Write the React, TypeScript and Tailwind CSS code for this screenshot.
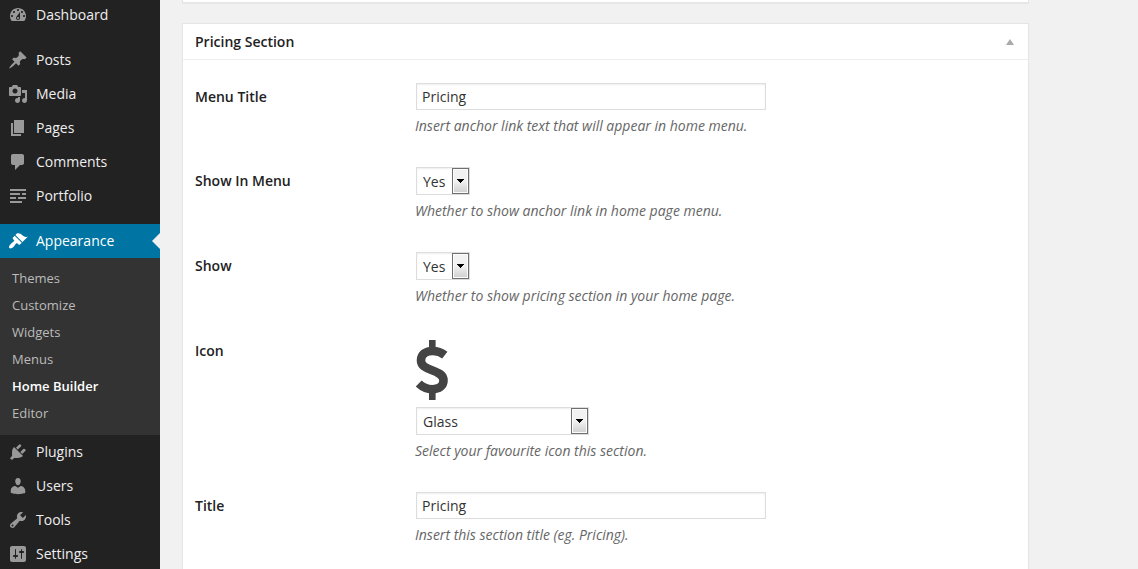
import { useState } from "react";
import type { ReactNode } from "react";

const ICONS = {
  dashboard:
    "M3.76 16h12.48c1.1-1.37 1.76-3.11 1.76-5 0-4.42-3.58-8-8-8s-8 3.58-8 8c0 1.89.66 3.63 1.76 5zM10 4c.55 0 1 .45 1 1s-.45 1-1 1-1-.45-1-1 .45-1 1-1zM6 6c.55 0 1 .45 1 1s-.45 1-1 1-1-.45-1-1 .45-1 1-1zm8 0c.55 0 1 .45 1 1s-.45 1-1 1-1-.45-1-1 .45-1 1-1zm-5.37 5.55L12 7v6c0 1.1-.9 2-2 2s-2-.9-2-2c0-.57.24-1.08.63-1.45zM4 10c.55 0 1 .45 1 1s-.45 1-1 1-1-.45-1-1 .45-1 1-1zm12 0c.55 0 1 .45 1 1s-.45 1-1 1-1-.45-1-1 .45-1 1-1zm-5 3c0-.55-.45-1-1-1s-1 .45-1 1 .45 1 1 1 1-.45 1-1z",
  posts:
    "M10.44 3.02l1.82-1.82 6.36 6.35-1.83 1.82c-1.05-.68-2.48-.57-3.41.36l-.75.75c-.92.93-1.04 2.35-.35 3.41l-1.83 1.82-2.41-2.41-2.8 2.79c-.42.42-3.38 2.71-3.8 2.29s1.86-3.39 2.28-3.81l2.79-2.79L4.1 9.36l1.83-1.82c1.05.69 2.48.57 3.4-.36l.75-.75c.93-.92 1.05-2.35.36-3.41z",
  media:
    "M13 11V4c0-.55-.45-1-1-1h-1.67L9 1H5L3.67 3H2c-.55 0-1 .45-1 1v7c0 .55.45 1 1 1h10c.55 0 1-.45 1-1zM7 4.5c1.38 0 2.5 1.12 2.5 2.5S8.38 9.5 7 9.5 4.5 8.38 4.5 7 5.62 4.5 7 4.5zM14 6h5v10.5c0 1.38-1.12 2.5-2.5 2.5S14 17.88 14 16.5s1.12-2.5 2.5-2.5c.17 0 .34.02.5.05V9h-3V6zm-4 8.05V13h2v3.5c0 1.38-1.12 2.5-2.5 2.5S7 17.88 7 16.5 8.12 14 9.5 14c.17 0 .34.02.5.05z",
  pages: "M6 15V2h10v13H6zm-1 1h8v2H3V5h2v11z",
  comments:
    "M5 2h9c1.1 0 2 .9 2 2v7c0 1.1-.9 2-2 2h-2l-5 5v-5H5c-1.1 0-2-.9-2-2V4c0-1.1.9-2 2-2z",
  portfolio:
    "M2 3h16v2H2zM2 7h10v2H2zM14 7h4v2h-4zM2 11h6v2H2zM10 11h8v2h-8zM2 15h12v2H2z",
  appearance:
    "M14.48 11.06L7.41 3.99l1.5-1.5c.5-.56 2.3-.47 3.51.32 1.21.8 1.43 1.28 2.91 2.1 1.18.64 2.45 1.26 4.45.85zm-.71.71L6.7 4.7 4.93 6.47c-.39.39-.39 1.02 0 1.41l1.06 1.06c.39.39.39 1.03 0 1.42-.6.6-1.43 1.11-2.21 1.69-.35.26-.7.53-1.01.84C1.43 14.23.4 16.08 1.4 17.07c.99 1 2.84-.03 4.18-1.36.31-.31.58-.66.85-1.02.57-.78 1.08-1.61 1.69-2.21.39-.39 1.02-.39 1.41 0l1.06 1.06c.39.39 1.02.39 1.41 0z",
  plugins:
    "M13.11 4.36L9.87 7.6 8 5.73l3.24-3.24c.35-.34 1.05-.2 1.56.32.52.51.66 1.21.31 1.55zm-8 1.77l.91-1.12 9.01 9.01-1.19.84c-.71.71-2.63 1.16-3.82 1.16H6.14L4.9 17.26c-.59.59-1.54.59-2.12 0-.59-.58-.59-1.53 0-2.12l1.24-1.24v-3.88c0-1.13.4-3.19 1.09-3.89zm7.26 3.97l3.24-3.24c.34-.35 1.04-.21 1.55.31.52.51.66 1.21.31 1.55l-3.24 3.25z",
  users:
    "M10 9.25c-2.27 0-2.73-3.44-2.73-3.44C7 4.02 7.82 2 9.97 2c2.16 0 2.98 2.02 2.71 3.81 0 0-.41 3.44-2.68 3.44zm0 2.57L12.72 10c2.39 0 4.52 2.33 4.52 4.53v2.49s-3.65 1.13-7.24 1.13c-3.65 0-7.24-1.13-7.24-1.13v-2.49c0-2.25 1.94-4.48 4.47-4.48z",
  tools:
    "M16.68 9.77c-1.34 1.34-3.3 1.67-4.95.99l-5.41 6.52c-.99.99-2.59.99-3.58 0s-.99-2.59 0-3.57l6.52-5.42c-.68-1.65-.35-3.61.99-4.95 1.28-1.28 3.12-1.62 4.72-1.06l-2.89 2.89 2.82 2.82 2.86-2.87c.53 1.58.18 3.39-1.08 4.65zM3.81 16.21c.4.39 1.04.39 1.43 0 .4-.4.4-1.04 0-1.43-.39-.4-1.03-.4-1.43 0-.39.39-.39 1.03 0 1.43z",
  settings:
    "M18 16V4c0-1.1-.9-2-2-2H4c-1.1 0-2 .9-2 2v12c0 1.1.9 2 2 2h12c1.1 0 2-.9 2-2zM8 11h1c.55 0 1 .45 1 1s-.45 1-1 1H8v1.5c0 .28-.22.5-.5.5s-.5-.22-.5-.5V13H6c-.55 0-1-.45-1-1s.45-1 1-1h1V5.5c0-.28.22-.5.5-.5s.5.22.5.5V11zm5-2h-1c-.55 0-1-.45-1-1s.45-1 1-1h1V5.5c0-.28.22-.5.5-.5s.5.22.5.5V7h1c.55 0 1 .45 1 1s-.45 1-1 1h-1v5.5c0 .28-.22.5-.5.5s-.5-.22-.5-.5V9z",
};

type IconName = keyof typeof ICONS;

function MenuItem({ icon, label, active = false }: { icon: IconName; label: string; active?: boolean }) {
  return (
    <a
      href="#"
      aria-current={active ? "true" : undefined}
      className={
        active
          ? "relative flex h-[34px] items-center gap-2 bg-[#0074a2] pl-2 text-sm text-white"
          : "flex h-[34px] items-center gap-2 pl-2 text-sm text-[#eeeeee] focus-visible:text-[#2ea2cc]"
      }
    >
      <svg viewBox="0 0 20 20" className={active ? "size-5 fill-white" : "size-5 fill-[#999999]"} aria-hidden="true">
        <path d={ICONS[icon]} />
      </svg>
      {label}
      {active && (
        <span className="absolute top-1/2 right-0 -mt-2 border-8 border-l-0 border-transparent border-r-[#f1f1f1]" />
      )}
    </a>
  );
}

const SUBMENU = ["Themes", "Customize", "Widgets", "Menus", "Home Builder", "Editor"];

function Sidebar() {
  return (
    <nav aria-label="Main menu" className="-mt-0.5 w-40 shrink-0">
      <MenuItem icon="dashboard" label="Dashboard" />
      <div className="mt-[11px]">
        <MenuItem icon="posts" label="Posts" />
        <MenuItem icon="media" label="Media" />
        <MenuItem icon="pages" label="Pages" />
        <MenuItem icon="comments" label="Comments" />
        <MenuItem icon="portfolio" label="Portfolio" />
      </div>
      <div className="mt-[11px]">
        <MenuItem icon="appearance" label="Appearance" active />
        <ul className="bg-[#333333] pt-[7px] pb-2">
          {SUBMENU.map((item) => (
            <li key={item}>
              <a
                href="#"
                className={
                  item === "Home Builder"
                    ? "flex h-[27px] items-center px-3 text-[13px] font-semibold text-white"
                    : "flex h-[27px] items-center px-3 text-[13px] text-[#bbbbbb] hover:text-[#2ea2cc]"
                }
              >
                {item}
              </a>
            </li>
          ))}
        </ul>
        <MenuItem icon="plugins" label="Plugins" />
        <MenuItem icon="users" label="Users" />
        <MenuItem icon="tools" label="Tools" />
        <MenuItem icon="settings" label="Settings" />
      </div>
    </nav>
  );
}

function Field({ id, label, hint, children }: { id: string; label: string; hint: string; children: ReactNode }) {
  return (
    <div className="flex">
      <label htmlFor={id} className="w-[221px] shrink-0 pt-1 text-sm leading-5 font-semibold text-[#222222]">
        {label}
      </label>
      <div className="min-w-0 flex-1">
        {children}
        <p id={`${id}-hint`} className="mt-1.5 -ml-px text-sm leading-5 text-[#666666] italic">
          {hint}
        </p>
      </div>
    </div>
  );
}

function TextField({ id, label, hint, initial }: { id: string; label: string; hint: string; initial: string }) {
  const [value, setValue] = useState(initial);
  return (
    <Field id={id} label={label} hint={hint}>
      <input
        id={id}
        type="text"
        value={value}
        onChange={(e) => setValue(e.target.value)}
        aria-describedby={`${id}-hint`}
        className="block h-[27px] w-full max-w-[350px] border border-[#dddddd] bg-white px-[5px] text-sm text-[#333333] shadow-[inset_0_1px_2px_rgba(0,0,0,0.07)]"
      />
    </Field>
  );
}

function SelectBox({ id, options, wide = false }: { id: string; options: string[]; wide?: boolean }) {
  return (
    <div className={wide ? "relative w-[173px]" : "relative w-[54px]"}>
      <select
        id={id}
        aria-describedby={`${id}-hint`}
        className="block h-7 w-full appearance-none border border-[#dddddd] bg-white pt-0.5 pr-[18px] pl-1.5 text-sm text-[#333333] shadow-[inset_0_1px_2px_rgba(0,0,0,0.07)]"
      >
        {options.map((option) => (
          <option key={option}>{option}</option>
        ))}
      </select>
      <span className="pointer-events-none absolute inset-y-px right-px flex w-[17px] items-center justify-center border border-[#707070] bg-linear-to-b from-[#f2f2f2] from-50% to-[#cfcfcf] to-100% shadow-[inset_0_0_0_1px_#fcfcfc]">
        <svg viewBox="0 0 7 4" className="h-1 w-[7px] fill-black" shapeRendering="crispEdges" aria-hidden="true">
          <path d="M0 0h7v1H0zM1 1h5v1H1zM2 2h3v1H2zM3 3h1v1H3z" />
        </svg>
      </span>
    </div>
  );
}

function DollarIcon() {
  return (
    <svg viewBox="0 0 32 60" className="h-[60px] w-8" fill="none" stroke="#444444" aria-hidden="true">
      <path
        strokeWidth="8.6"
        d="M28.8 15.2C25 12.3 21.5 11 17 11C9.5 11 5 14.500 5 20.300C5 25.800 9.500 27.900 16 30.200C22.800 32.700 27.500 35 27.500 40.500C27.500 46 23 49.200 16.300 49.200C11 49.200 6.500 47.200 2.700 43.500"
      />
      <path strokeWidth="6.6" d="M16.300 0v10M16.300 50v10" />
    </svg>
  );
}

export default function App() {
  const [open, setOpen] = useState(true);
  return (
    <div className="flex h-screen overflow-hidden bg-[#222222] font-['Open_Sans','Noto_Sans',sans-serif]">
      <Sidebar />
      <main className="min-w-0 flex-1 bg-[#f1f1f1] pr-[109px] pl-[22px]">
        <div className="h-[3px] border border-t-0 border-[#e5e5e5] bg-white shadow-[0_1px_1px_rgba(0,0,0,0.04)]" />
        <section className="mt-5 border border-[#e5e5e5] bg-white shadow-[0_1px_1px_rgba(0,0,0,0.04)]">
          <header className="flex h-9 items-center justify-between border-b border-[#eeeeee] pr-3.5 pl-3">
            <h2 className="text-sm font-semibold text-[#222222]">Pricing Section</h2>
            <button type="button" aria-label="Toggle panel" aria-expanded={open} onClick={() => setOpen(!open)}>
              <svg viewBox="0 0 8 6" className="h-1.5 w-2 fill-[#aaaaaa]" aria-hidden="true">
                <path d="M4 0l4 6H0z" />
              </svg>
            </button>
          </header>
          {open && (
            <form className="flex flex-col gap-[31px] px-3 pt-[23px] pb-8">
              <TextField
                id="menu-title"
                label="Menu Title"
                hint="Insert anchor link text that will appear in home menu."
                initial="Pricing"
              />
              <Field id="show-in-menu" label="Show In Menu" hint="Whether to show anchor link in home page menu.">
                <SelectBox id="show-in-menu" options={["Yes", "No"]} />
              </Field>
              <Field id="show" label="Show" hint="Whether to show pricing section in your home page.">
                <SelectBox id="show" options={["Yes", "No"]} />
              </Field>
              <Field id="icon" label="Icon" hint="Select your favourite icon this section.">
                <div className="flex h-[70px] items-center pb-1">
                  <DollarIcon />
                </div>
                <SelectBox id="icon" options={["Glass", "Music", "Search"]} wide />
              </Field>
              <TextField
                id="title"
                label="Title"
                hint="Insert this section title (eg. Pricing)."
                initial="Pricing"
              />
            </form>
          )}
        </section>
      </main>
    </div>
  );
}
